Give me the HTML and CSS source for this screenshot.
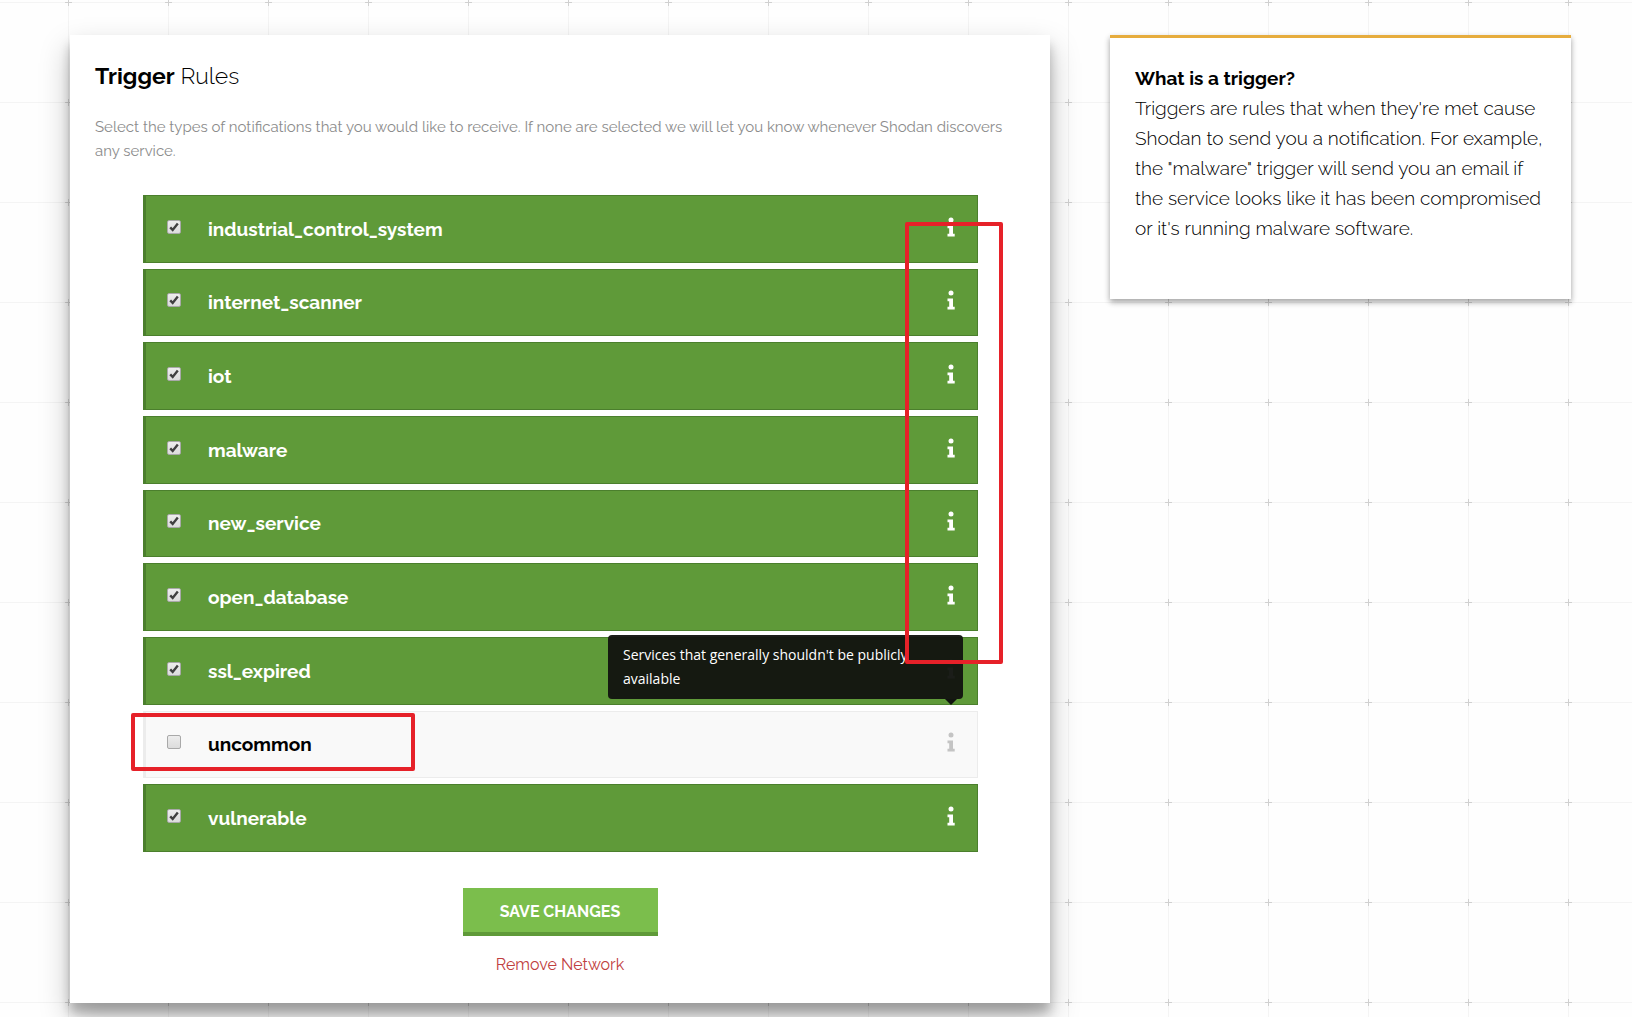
FILE: index.html
```
<!DOCTYPE html>
<html lang="en">
<head>
<meta charset="utf-8">
<meta name="viewport" content="width=device-width, initial-scale=1">
<title>Trigger Rules</title>
<link rel="stylesheet" href="styles.css">
</head>
<body>
<svg class="sprite" aria-hidden="true">
  <symbol id="info" viewBox="0 0 8 20">
    <circle cx="4" cy="3" r="2.5"/>
    <path d="M.5 8.4h5.5v8.3h1.7v2.9H.5v-2.9h1.7v-5.4H.5z"/>
  </symbol>
</svg>
<div class="page">
  <main class="card rules">
    <h1 class="title"><strong>Trigger</strong> Rules</h1>
    <p class="intro">Select the types of notifications that you would like to receive. If none are selected we will let you know whenever Shodan discovers any service.</p>
    <form class="form">
      <div class="list">
        <div class="rule on"><input class="tick" type="checkbox" id="r1" checked><label class="name" for="r1">industrial_control_system</label><svg class="info"><use href="#info"/></svg></div>
        <div class="rule on"><input class="tick" type="checkbox" id="r2" checked><label class="name" for="r2">internet_scanner</label><svg class="info"><use href="#info"/></svg></div>
        <div class="rule on"><input class="tick" type="checkbox" id="r3" checked><label class="name" for="r3">iot</label><svg class="info"><use href="#info"/></svg></div>
        <div class="rule on"><input class="tick" type="checkbox" id="r4" checked><label class="name" for="r4">malware</label><svg class="info"><use href="#info"/></svg></div>
        <div class="rule on"><input class="tick" type="checkbox" id="r5" checked><label class="name" for="r5">new_service</label><svg class="info"><use href="#info"/></svg></div>
        <div class="rule on"><input class="tick" type="checkbox" id="r6" checked><label class="name" for="r6">open_database</label><svg class="info"><use href="#info"/></svg></div>
        <div class="rule on"><input class="tick" type="checkbox" id="r7" checked><label class="name" for="r7">ssl_expired</label><svg class="info"><use href="#info"/></svg></div>
        <div class="rule"><input class="tick" type="checkbox" id="r8"><label class="name" for="r8">uncommon</label><svg class="info"><use href="#info"/></svg><div class="tooltip" role="tooltip">Services that generally shouldn't be publicly available</div></div>
        <div class="rule on"><input class="tick" type="checkbox" id="r9" checked><label class="name" for="r9">vulnerable</label><svg class="info"><use href="#info"/></svg></div>
        <div class="mark mark-icons"></div>
        <div class="mark mark-name"></div>
      </div>
      <button class="save" type="submit">SAVE CHANGES</button>
      <a class="remove" href="#">Remove Network</a>
    </form>
  </main>
  <aside class="card help">
    <h2 class="question">What is a trigger?</h2>
    <p class="answer">Triggers are rules that when they're met cause Shodan to send you a notification. For example, the "malware" trigger will send you an email if the service looks like it has been compromised or it's running malware software.</p>
  </aside>
</div>
</body>
</html>
```
FILE: styles.css
```
* { box-sizing: border-box; }

body {
  margin: 0;
  color: #000;
  font-family: Raleway, Lato, "Open Sans", sans-serif;
  font-weight: 400;
  background: #fefefe url("data:image/svg+xml,%3Csvg xmlns='http://www.w3.org/2000/svg' width='100' height='100' shape-rendering='crispEdges'%3E%3Cpath d='M50 0h1v100h-1zM0 50h100v1H0z' fill='%23f4f4f4'/%3E%3Cpath d='M47 50h7v1h-7zM50 47h1v7h-1z' fill='%23d0d0d0'/%3E%3C/svg%3E") 18px 52px;
}

.sprite { position: absolute; width: 0; height: 0; }

.page {
  display: grid;
  grid-template-columns: 980fr 461fr;
  gap: 60px;
  align-items: start;
  padding: 35px 61px 14px 70px;
}

.card { background: #fff; padding: 25px; }

.rules {
  padding-bottom: 23px;
  box-shadow: 0 14px 28px rgba(0, 0, 0, .25), 0 10px 10px rgba(0, 0, 0, .22);
}

.help {
  padding-bottom: 56px;
  border-top: 3px solid #e6ac3d;
  box-shadow: 0 3px 6px rgba(0, 0, 0, .16), 0 3px 6px rgba(0, 0, 0, .23);
}

.title {
  margin: 0 0 23px;
  font-size: 23px;
  line-height: 32px;
  font-weight: 300;
}
.title strong { font-weight: 700; }

.intro {
  margin: 0 0 32px;
  padding-right: 16px;
  color: #8c8c8c;
  font-size: 15px;
  line-height: 24px;
}

.form { display: flex; flex-direction: column; align-items: center; }

.list {
  position: relative;
  align-self: stretch;
  display: grid;
  grid-auto-rows: 1fr;
  gap: 6px;
  min-height: 657px;
  margin: 0 47px 36px 48px;
}

.rule {
  position: relative;
  display: flex;
  align-items: center;
  padding: 0 22px 0 21px;
  border: 1px solid #ececec;
  border-left-width: 3px;
  background: #f9f9f9;
  color: #c4c4c4;
}
.rule.on { border-color: #4b7f2d; background: #5f9a39; color: #fff; }

.tick {
  appearance: none;
  width: 14px;
  height: 14px;
  margin: 0 27px 4px 0;
  border: 1px solid #a9a9a9;
  border-radius: 2px;
  background: linear-gradient(#ededed, #dcdcdc);
}
.tick:checked {
  background: url("data:image/svg+xml,%3Csvg xmlns='http://www.w3.org/2000/svg' viewBox='0 0 12 12'%3E%3Cpath d='M2.2 6.3l2.5 2.6L9.8 2.6' fill='none' stroke='%23404040' stroke-width='2.4'/%3E%3C/svg%3E"), linear-gradient(#ededed, #dcdcdc);
}

.name {
  flex: 1;
  color: #000;
  font-size: 19px;
  line-height: 30px;
  font-weight: 700;
}
.on .name { color: #fff; }

.info { width: 8px; height: 20px; margin-bottom: 4px; fill: currentColor; }

.tooltip {
  position: absolute;
  right: 14px;
  bottom: calc(100% + 13px);
  width: 355px;
  padding: 8px 15px;
  border-radius: 4px;
  background: rgba(18, 20, 16, .96);
  color: #fff;
  font: 14px/24px "Open Sans", "Noto Sans", sans-serif;
}
.tooltip::after {
  content: "";
  position: absolute;
  top: 100%;
  right: 6px;
  border: 6px solid transparent;
  border-top-color: #121410;
  border-bottom-width: 0;
}

.mark { position: absolute; border: 4px solid #e62129; border-radius: 2px; pointer-events: none; }
.mark-icons { top: 27px; right: -25px; width: 98px; height: 442px; }
.mark-name { top: 518px; left: -12px; width: 284px; height: 58px; }

.save {
  width: 195px;
  height: 48px;
  padding: 4px 0 0;
  border: 0;
  border-bottom: 4px solid #5f9a39;
  background: #7bbe4c;
  color: #fff;
  font: 700 16px/24px Raleway, Lato, "Open Sans", sans-serif;
}

.remove {
  margin-top: 14px;
  color: #bf4040;
  font-size: 16px;
  line-height: 30px;
  text-decoration: none;
}

.question, .answer { margin: 0; font-size: 19px; line-height: 30px; }
.question { font-weight: 700; }
.answer { font-weight: 300; }
```
